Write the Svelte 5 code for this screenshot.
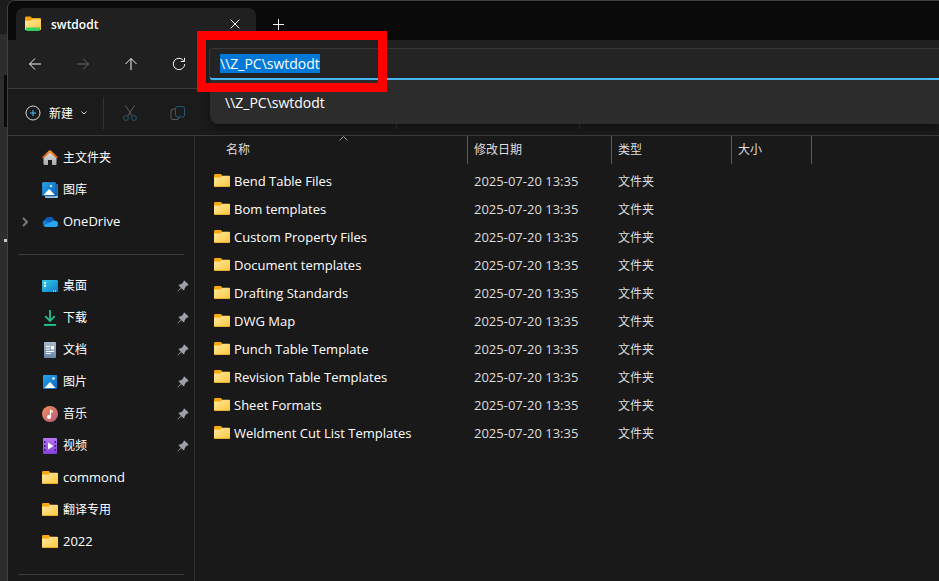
<script>
	import { onMount } from 'svelte';

	let address = '\\\\Z_PC\\swtdodt';
	/**
	 * @type {HTMLInputElement}
	 */
	let addressInput;

	const home = [
		{ name: '主文件夹', icon: 'home' },
		{ name: '图库', icon: 'gallery' },
		{ name: 'OneDrive', icon: 'cloud', latin: true, expandable: true }
	];

	const quickAccess = [
		{ name: '桌面', icon: 'desktop', pinned: true },
		{ name: '下载', icon: 'download', pinned: true },
		{ name: '文档', icon: 'document', pinned: true },
		{ name: '图片', icon: 'picture', pinned: true },
		{ name: '音乐', icon: 'music', pinned: true },
		{ name: '视频', icon: 'video', pinned: true },
		{ name: 'commond', icon: 'folder', latin: true },
		{ name: '翻译专用', icon: 'folder' },
		{ name: '2022', icon: 'folder', latin: true }
	];

	const folders = [
		'Bend Table Files',
		'Bom templates',
		'Custom Property Files',
		'Document templates',
		'Drafting Standards',
		'DWG Map',
		'Punch Table Template',
		'Revision Table Templates',
		'Sheet Formats',
		'Weldment Cut List Templates'
	].map((name) => ({ name, modified: '2025-07-20 13:35', type: '文件夹' }));

	onMount(() => {
		addressInput.focus();
		addressInput.select();
	});
</script>

<svelte:head>
	<title>swtdodt</title>
</svelte:head>

<!-- shared gradients and symbols -->
<svg class="defs" aria-hidden="true">
	<defs>
		<linearGradient id="g-folder" x1="0" y1="0" x2="1" y2="1">
			<stop offset="0" stop-color="#ffe9a2" />
			<stop offset="1" stop-color="#fcc63c" />
		</linearGradient>
		<linearGradient id="g-blue" x1="0" y1="0" x2="1" y2="1">
			<stop offset="0" stop-color="#2aa5ea" />
			<stop offset="1" stop-color="#0a66c0" />
		</linearGradient>
		<linearGradient id="g-desk" x1="0" y1="0" x2="1" y2="1">
			<stop offset="0" stop-color="#35d0ea" />
			<stop offset="1" stop-color="#0f78cc" />
		</linearGradient>
		<linearGradient id="g-wall" x1="0" y1="0" x2="0" y2="1">
			<stop offset="0" stop-color="#e2e2e2" />
			<stop offset="1" stop-color="#a9a9a9" />
		</linearGradient>
		<linearGradient id="g-roof" x1="0" y1="0" x2="0" y2="1">
			<stop offset="0" stop-color="#ffa136" />
			<stop offset="1" stop-color="#d24a12" />
		</linearGradient>
		<linearGradient id="g-doc" x1="0" y1="0" x2="0" y2="1">
			<stop offset="0" stop-color="#a9bad0" />
			<stop offset="1" stop-color="#6b84a8" />
		</linearGradient>
		<linearGradient id="g-music" x1="0" y1="0" x2="1" y2="1">
			<stop offset="0" stop-color="#f3925a" />
			<stop offset="1" stop-color="#b8587f" />
		</linearGradient>
		<linearGradient id="g-video" x1="0" y1="0" x2="0" y2="1">
			<stop offset="0" stop-color="#b877f2" />
			<stop offset="1" stop-color="#8540dc" />
		</linearGradient>
		<linearGradient id="g-down" x1="0" y1="0" x2="0" y2="1">
			<stop offset="0" stop-color="#35d08f" />
			<stop offset="1" stop-color="#12a38c" />
		</linearGradient>
	</defs>
	<symbol id="folder" viewBox="0 0 16 16">
		<path d="M0 2.500q0-1.500 1-1.500h5.500q.6 0 1 .5L8.500 3H15q1 0 1 1v4H0z" fill="#f7a90c" />
		<path d="M0 5q0-.5.8-.5h5.200q.5 0 .9-.4l.9-.9q.4-.4.9-.4H15q1 0 1 1V13q0 1-1 1H1q-1 0-1-1z" fill="url(#g-folder)" />
		<path d="M0 12.800q0 1.200 1 1.200h14q1 0 1-1.200-.3.500-1 .5H1q-.7 0-1-.5z" fill="#e8a31c" />
	</symbol>
	<symbol id="home" viewBox="0 0 16 16">
		<path d="M1.500 7 8 1.300 14.500 7v7q0 1-1 1H10v-5H6v5H2.500q-1 0-1-1z" fill="url(#g-wall)" />
		<path d="M8 .2q.6 0 1.200.5l6.400 6q.600.700 0 1.300-.7.500-1.300 0L8 2.700 1.700 8q-.6.500-1.300 0-.6-.6 0-1.300l6.400-6Q7.400.2 8 .2z" fill="url(#g-roof)" />
	</symbol>
	<symbol id="gallery" viewBox="0 0 16 16">
		<path d="M3 2h12q1 0 1 1v12q0 1-1 1H4q-1 0-1-1z" fill="#2b71bb" />
		<path d="M3 14h13v1q0 1-1 1H4q-1 0-1-1z" fill="#91bfe8" />
		<rect width="14" height="14" rx="1" fill="url(#g-blue)" stroke="#191919" stroke-width=".3" />
		<path d="m1.500 13 5.200-5.500q.6-.6 1.200 0L12.700 13z" fill="#fff" />
		<circle cx="9" cy="4" r="1.100" fill="#fff" />
	</symbol>
	<symbol id="cloud" viewBox="0 0 16 16">
		<path d="M3.500 12.500A3.500 3.500 0 0 1 3 5.800a5 5 0 0 1 9.300 1A3.200 3.200 0 0 1 16 9.800a3 3 0 0 1-3 3.200H4z" fill="#0f78d4" />
		<path d="M3 5.800a5 5 0 0 1 6-2.500q2.600.9 3.300 3.500L8 9.500z" fill="#0a5cb8" />
		<path d="M1.300 11.600 8.600 8q2-1.300 3.700-1.200A3.200 3.200 0 0 1 16 9.800a3 3 0 0 1-3 3.200H4q-1.800 0-2.700-1.400z" fill="#28a3ec" />
	</symbol>
	<symbol id="desktop" viewBox="0 0 16 16">
		<rect y="2" width="16" height="12" rx="1" fill="url(#g-desk)" />
		<path d="M2 4h2v2H2zM2 7h2v2H2z" fill="#fff" />
		<path d="M11 12.500h1v1h-1zM13 12.500h1v1h-1z" fill="#e5f6ff" />
	</symbol>
	<symbol id="download" viewBox="0 0 16 16">
		<path d="M8 0v11M3.200 6.200 8 11l4.800-4.800" fill="none" stroke="#23bd8f" stroke-width="1.800" />
		<rect x="2" y="14" width="12" height="2" rx=".5" fill="url(#g-down)" />
	</symbol>
	<symbol id="document" viewBox="0 0 16 16">
		<rect x="2" width="12" height="16" rx="1" fill="url(#g-doc)" />
		<path d="M4 4.500h4M4 7h4M4 9.500h8M4 11.500h5" stroke="#fff" />
		<path d="M9 4h3v3.500H9z" fill="#fff" />
	</symbol>
	<symbol id="picture" viewBox="0 0 16 16">
		<rect x="1" y="1" width="14" height="14" rx="1" fill="url(#g-blue)" />
		<path d="m2.500 14 5-5.500q.5-.5 1 0l5 5.500z" fill="#fff" />
		<circle cx="11.500" cy="4.500" r="1.300" fill="#fff" />
	</symbol>
	<symbol id="music" viewBox="0 0 16 16">
		<circle cx="8" cy="8" r="8" fill="url(#g-music)" />
		<path d="M8 3.500 10.800 5v1.800L9 6v5a2 2 0 1 1-1-1.700z" fill="#fff" />
	</symbol>
	<symbol id="video" viewBox="0 0 16 16">
		<rect x="1" width="14" height="16" rx="1" fill="url(#g-video)" />
		<path d="M2 3h1.500v2H2zM2 7h1.500v2H2zM2 11h1.500v2H2zM12.500 3H14v2h-1.500zM12.500 7H14v2h-1.500zM12.500 11H14v2h-1.500z" fill="#4d1c96" />
		<path d="m6 4.500 5.500 3.500L6 11.500z" fill="#fff" />
	</symbol>
	<symbol id="pin" viewBox="0 0 12 12">
		<path d="M7.500.5 11.500 4.500 10.900 5.600 9.700 5.700 7.800 7.900 7.400 10 6.500 10.300 4.300 8.200 1 11.500.5 11 3.800 7.700 1.700 5.500 2 4.600 4.100 4.200 6.300 2.300 6.400 1.100z" fill="#9aa0a6" />
	</symbol>
</svg>

<div class="desktop">
	<div class="behind"><i class="edge"></i><i class="mark"></i></div>
	<div class="window">
		<header class="titlebar">
			<div class="tab">
				<svg width="16" height="16" viewBox="0 0 16 16">
					<path d="M0 2q0-1.500 1-1.500h4.500L7 2h8q1 0 1 1v5H0z" fill="#f3a40b" />
					<path d="M0 5.500q0-.7.8-.7h5L7.500 3.200H15q1 0 1 1V14H0z" fill="url(#g-folder)" />
					<path d="M1 11.500h14V13q0 1.800-1 2H2q-1-.2-1-2z" fill="#36cf5c" />
				</svg>
				<span>swtdodt</span>
				<button class="close" aria-label="关闭选项卡">
					<svg width="10" height="10" viewBox="0 0 10 10"><path d="m.7.7 8.600 8.600M9.300.7.7 9.300" /></svg>
				</button>
			</div>
			<button class="add" aria-label="添加新选项卡">
				<svg width="11" height="11" viewBox="0 0 11 11"><path d="M5.500 0v11M0 5.500h11" /></svg>
			</button>
		</header>

		<nav class="navbar">
			<button aria-label="后退">
				<svg width="14" height="14" viewBox="0 0 14 14"><path d="M13 7H1.500M7 1.500 1.500 7 7 12.500" /></svg>
			</button>
			<button aria-label="前进" disabled>
				<svg width="14" height="14" viewBox="0 0 14 14"><path d="M1 7h11.500M7 1.500 12.500 7 7 12.500" /></svg>
			</button>
			<button aria-label="向上">
				<svg width="14" height="14" viewBox="0 0 14 14"><path d="M7 13V1.500M1.500 7 7 1.500 12.500 7" /></svg>
			</button>
			<button aria-label="刷新">
				<svg width="14" height="14" viewBox="0 0 14 14"><path d="M12.700 7A5.700 5.700 0 1 1 11.600 3.600M12.500.8v3.700H8.800" /></svg>
			</button>
			<div class="address">
				<input type="text" aria-label="地址栏" spellcheck="false" bind:this={addressInput} bind:value={address} />
				<ul class="suggestions">
					<li><a href="#top">{'\\\\Z_PC\\swtdodt'}</a></li>
				</ul>
				<div class="highlight"></div>
			</div>
		</nav>

		<div class="toolbar">
			<button class="new">
				<svg width="16" height="16" viewBox="0 0 16 16">
					<circle cx="8" cy="8" r="7" />
					<path d="M8 5v6M5 8h6" class="accent" />
				</svg>
				<span>新建</span>
				<svg width="6" height="6" viewBox="0 0 6 6"><path d="M.5 1.500 3 4l2.500-2.500" /></svg>
			</button>
			<i class="sep"></i>
			<button class="tool" aria-label="剪切" disabled>
				<svg width="16" height="16" viewBox="0 0 16 16">
					<path d="m3.500.5 6.800 10.700M12.500.5 5.700 11.200" />
					<circle cx="4" cy="13" r="2.400" class="accent" />
					<circle cx="12" cy="13" r="2.400" class="accent" />
				</svg>
			</button>
			<button class="tool" aria-label="复制" disabled>
				<svg width="16" height="16" viewBox="0 0 16 16">
					<path d="M5 4H3Q1 4 1 6v6.500q0 2 2 2h4q2 0 2-2" />
					<rect x="5.500" y="1.500" width="9" height="10.500" rx="2" class="accent" />
				</svg>
			</button>
			<div class="group edit"></div>
			<div class="group view"></div>
		</div>

		<div class="content">
			<aside>
				{#each [home, quickAccess] as group}
					<ul>
						{#each group as item}
							<li>
								<span class="expander">
									{#if item.expandable}
										<svg width="6" height="10" viewBox="0 0 6 10"><path d="m1 1 4 4-4 4" /></svg>
									{/if}
								</span>
								<svg width="16" height="16"><use href="#{item.icon}" /></svg>
								<a href="#{item.icon}" class:latin={item.latin}>{item.name}</a>
								{#if item.pinned}
									<svg width="12" height="12"><use href="#pin" /></svg>
								{/if}
							</li>
						{/each}
					</ul>
					<hr />
				{/each}
			</aside>
			<main>
				<table>
					<thead>
						<tr>
							<th class="name">
								名称
								<svg class="sort" width="9" height="5" viewBox="0 0 9 5"><path d="M.5 4.500l4-4 4 4" /></svg>
							</th>
							<th class="date">修改日期</th>
							<th class="type">类型</th>
							<th class="size">大小</th>
							<th></th>
						</tr>
					</thead>
					<tbody>
						{#each folders as folder}
							<tr>
								<td class="title">
									<div class="file">
										<svg width="16" height="16"><use href="#folder" /></svg>
										<span>{folder.name}</span>
									</div>
								</td>
								<td><div class="latin">{folder.modified}</div></td>
								<td>{folder.type}</td>
								<td></td>
								<td></td>
							</tr>
						{/each}
					</tbody>
				</table>
			</main>
		</div>
	</div>
</div>

<style>
	:global(body) {
		background: #191919;
	}
	.desktop {
		display: flex;
		min-height: 100vh;
		overflow: hidden;
		font-family: 'Open Sans', 'Noto Sans CJK SC', sans-serif;
		font-size: 12px;
		line-height: 16px;
		color: #fff;
	}
	.defs {
		position: absolute;
		width: 0;
		height: 0;
	}
	svg {
		flex: none;
		display: block;
		fill: none;
		stroke-width: 1;
	}
	button {
		display: flex;
		align-items: center;
		justify-content: center;
		padding: 0;
		border: 0;
		background: none;
		color: inherit;
		font: inherit;
		stroke: #f2f2f2;
	}
	button span {
		stroke: none;
	}
	a {
		color: inherit;
		text-decoration: none;
	}
	ul {
		list-style: none;
		margin: 0;
		padding: 0;
	}
	/* latin text sits lower than the chinese labels */
	.latin,
	.file {
		padding-bottom: 2px;
		font-size: 13px;
	}

	/* other windows peeking out on the left */
	.behind {
		flex: none;
		display: flex;
		flex-direction: column;
		align-items: flex-end;
		width: 7px;
		background: linear-gradient(#1c1c1c 34px, #2d2d2d 34px);
	}
	.edge {
		width: 3px;
		height: 52px;
		margin-top: 75px;
		background: #090909;
	}
	.mark {
		width: 3px;
		height: 3px;
		margin-top: 112px;
		background: #c8c8c8;
	}

	.window {
		flex: 1;
		display: flex;
		flex-direction: column;
		min-width: 0;
		border: 1px solid #404040;
		border-width: 1px 0 0 1px;
		border-top-left-radius: 8px;
		background: #191919;
	}
	.titlebar {
		display: flex;
		height: 39px;
		padding-left: 8px;
		background: #0a0a0a;
		border-top-left-radius: 7px;
	}
	.tab {
		display: flex;
		align-items: center;
		gap: 10px;
		box-sizing: border-box;
		width: 240px;
		margin-top: 7px;
		padding: 0 9px;
		border-radius: 8px 8px 0 0;
		background: #202020;
		font-weight: 600;
	}
	.tab span,
	.new span {
		padding-top: 2px;
	}
	.close {
		width: 24px;
		height: 24px;
		margin-left: auto;
	}
	.add {
		width: 32px;
		margin: 8px 0 0 6px;
	}

	.navbar {
		display: flex;
		align-items: center;
		height: 48px;
		padding-left: 3px;
		background: #202020;
		border-bottom: 1px solid #3a3a3a;
	}
	.navbar button {
		width: 48px;
		height: 36px;
	}
	.navbar button:disabled {
		stroke: #646464;
	}
	.address {
		position: relative;
		flex: 1;
		margin-left: 6px;
		font-size: 14px;
	}
	.address input {
		display: block;
		box-sizing: border-box;
		width: 100%;
		height: 32px;
		padding: 0 10px;
		border: 1px solid #363636;
		border-right: 0;
		border-bottom: 2px solid #4cc2ff;
		border-radius: 4px 0 0 4px;
		outline: none;
		background: #242424;
		color: #fff;
		font: inherit;
		line-height: 19px;
	}
	.address input::selection {
		background: #0078d7;
		color: #fff;
	}
	.suggestions {
		position: absolute;
		z-index: 1;
		top: 32px;
		left: 1px;
		right: 0;
		border-radius: 0 0 0 8px;
		background: #2c2c2c;
		box-shadow: 0 4px 10px rgba(0, 0, 0, 0.4);
	}
	.suggestions a {
		display: block;
		padding: 13px 15px 11px;
		line-height: 20px;
	}
	.highlight {
		position: absolute;
		z-index: 2;
		top: -17px;
		left: -12px;
		width: 172px;
		height: 43px;
		border: 9px solid #f00;
		pointer-events: none;
	}

	.toolbar {
		display: flex;
		align-items: center;
		box-sizing: border-box;
		height: 47px;
		padding: 2px 0 0 17px;
		background: #1b1b1b;
		border-bottom: 1px solid #3a3a3a;
	}
	.new {
		gap: 8px;
		stroke: #d8d8d8;
	}
	.new .accent {
		stroke: #4cc2ff;
	}
	.sep {
		width: 1px;
		height: 32px;
		margin: 0 2px 0 16px;
		background: #323232;
	}
	.tool {
		width: 48px;
		height: 36px;
		stroke: #5e5e5e;
	}
	.tool .accent {
		stroke: #265a75;
	}
	.group {
		box-sizing: border-box;
		height: 32px;
		border-right: 1px solid #323232;
	}
	.edit {
		width: 195px;
	}
	.view {
		width: 183px;
	}

	.content {
		flex: 1;
		display: flex;
	}
	aside {
		flex: none;
		box-sizing: border-box;
		width: 187px;
		padding: 6px 0;
		border-right: 1px solid #2e2e2e;
	}
	aside li {
		display: flex;
		align-items: center;
		height: 32px;
		padding: 0 5px 0 10px;
	}
	.expander {
		width: 24px;
		padding-left: 4px;
		box-sizing: border-box;
		stroke: #777;
	}
	.expander svg {
		stroke-width: 2;
	}
	aside a {
		flex: 1;
		margin-left: 5px;
	}
	aside hr {
		height: 1px;
		margin: 16px 10px 15px;
		border: 0;
		background: #3c3c3c;
	}
	aside hr:last-child {
		margin-bottom: 0;
	}

	main {
		flex: 1;
		min-width: 0;
	}
	table {
		width: 100%;
		table-layout: fixed;
		border-collapse: separate;
		border-spacing: 0;
	}
	th {
		position: relative;
		box-sizing: border-box;
		height: 28px;
		padding: 0 6px;
		border-right: 1px solid #5a5a5a;
		font-weight: 400;
		text-align: left;
		color: #dedede;
	}
	th:last-child {
		border: 0;
	}
	.name {
		width: 273px;
		padding-left: 31px;
	}
	.date {
		width: 144px;
	}
	.type {
		width: 120px;
	}
	.size {
		width: 80px;
	}
	.sort {
		position: absolute;
		top: 0;
		left: 144px;
		stroke: #a0a0a0;
	}
	tbody::before {
		content: '';
		display: block;
		height: 4px;
	}
	td {
		height: 28px;
		padding: 0 6px;
		color: #dedede;
	}
	.title {
		padding-left: 19px;
		color: #fff;
	}
	.file {
		display: flex;
		align-items: center;
		gap: 4px;
		white-space: nowrap;
	}
</style>
